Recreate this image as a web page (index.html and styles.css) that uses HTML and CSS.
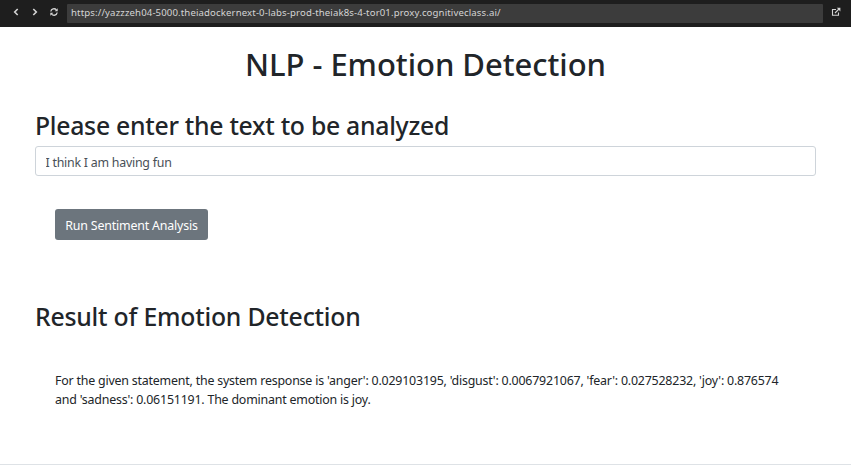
FILE: index.html
```html
<!DOCTYPE html>
<html lang="en">
<head>
<meta charset="utf-8">
<title>Emotion Detection</title>
<link rel="stylesheet" href="styles.css">
</head>
<body>
<header class="toolbar">
  <svg class="icon" viewBox="0 0 10 10"><path d="M6.7 2 3.7 5l3 3"/></svg>
  <svg class="icon" viewBox="0 0 10 10"><path d="m3.3 2 3 3-3 3"/></svg>
  <svg class="icon refresh" viewBox="0 0 10 10"><path d="M1.8 4.5a3.2 3.2 0 0 1 5.6-1.6M8.2 5.5a3.2 3.2 0 0 1-5.6 1.6"/><path class="solid" d="M8.7 1.3v3H5.7zM1.3 8.7v-3h3z"/></svg>
  <div class="address"><span class="url">https://yazzzeh04-5000.theiadockernext-0-labs-prod-theiak8s-4-tor01.proxy.cognitiveclass.ai/</span></div>
  <svg class="icon open" viewBox="0 0 10 10"><path d="M5 2.5H1.5v5.8h6V5.5M4 6l4-4"/><path class="solid" d="M5.8.8h3.6v3.6z"/></svg>
</header>
<main>
  <h1><span>NLP - Emotion Detection</span></h1>
  <h2 class="prompt"><span>Please enter the text to be analyzed</span></h2>
  <input class="field" type="text" value="I think I am having fun">
  <button class="run"><span>Run Sentiment Analysis</span></button>
  <h2 class="result-title"><span>Result of Emotion Detection</span></h2>
  <p class="result"><span class="line-one">For the given statement, the system response is 'anger': 0.029103195, 'disgust': 0.0067921067, 'fear': 0.027528232, 'joy': 0.876574</span><br><span class="line-two">and 'sadness': 0.06151191. The dominant emotion is joy.</span></p>
</main>
</body>
</html>
```
FILE: styles.css
```css
* { box-sizing: border-box; }
body {
  margin: 0;
  height: 465px;
  display: flex;
  flex-direction: column;
  overflow: hidden;
  background: #fff;
  color: #212529;
  font: 12.4px/19.2px "Noto Sans", "Open Sans", sans-serif;
  letter-spacing: -0.2px;
}
.toolbar {
  height: 27px;
  flex: none;
  display: flex;
  align-items: center;
  padding: 0 10px 3px 11px;
  background: #1e1e1e;
}
.icon {
  width: 10px;
  height: 10px;
  flex: none;
  margin-right: 9px;
  fill: none;
  stroke: #d4d4d4;
  stroke-width: 1.6;
}
.refresh { margin-right: 8px; stroke-width: 1.3; }
.open { margin: 0 0 0 8px; stroke-width: 1.1; }
.solid { fill: #d4d4d4; stroke: none; }
.address {
  flex: 1;
  height: 19px;
  margin-top: 2px;
  padding-left: 4px;
  border-radius: 1px;
  background: #3c3c3c;
  color: #d4d4d4;
  font-size: 9.6px;
  line-height: 17px;
  letter-spacing: 0.13px;
  white-space: nowrap;
}
main {
  flex: 1;
  display: flex;
  flex-direction: column;
  padding: 18px 35px 0;
  border-bottom: 1px solid #dee2e6;
}
h1, h2, p { margin: 0; white-space: nowrap; font-weight: 500; }
h1 { font-size: 31px; line-height: 38px; letter-spacing: -0.04px; text-align: center; }
h2 { font-size: 24.8px; line-height: 31px; letter-spacing: -0.22px; }
.prompt { margin-top: 27px; letter-spacing: -0.28px; }
.field {
  height: 30px;
  margin-top: 5px;
  padding: 2px 10px 0 9.5px;
  border: 1px solid #ced4da;
  border-radius: 3px;
  background: #fff;
  color: #495057;
  font: inherit;
  letter-spacing: -0.24px;
}
.run {
  width: 153px;
  height: 31px;
  margin: 33px 0 0 20px;
  padding: 2px 0 0;
  border: 0;
  border-radius: 3px;
  background: #6c757d;
  color: #fff;
  font: inherit;
  letter-spacing: -0.18px;
}
.result-title { margin-top: 61px; }
.result { margin: 39px 0 0 20px; font-weight: 400; }
```
